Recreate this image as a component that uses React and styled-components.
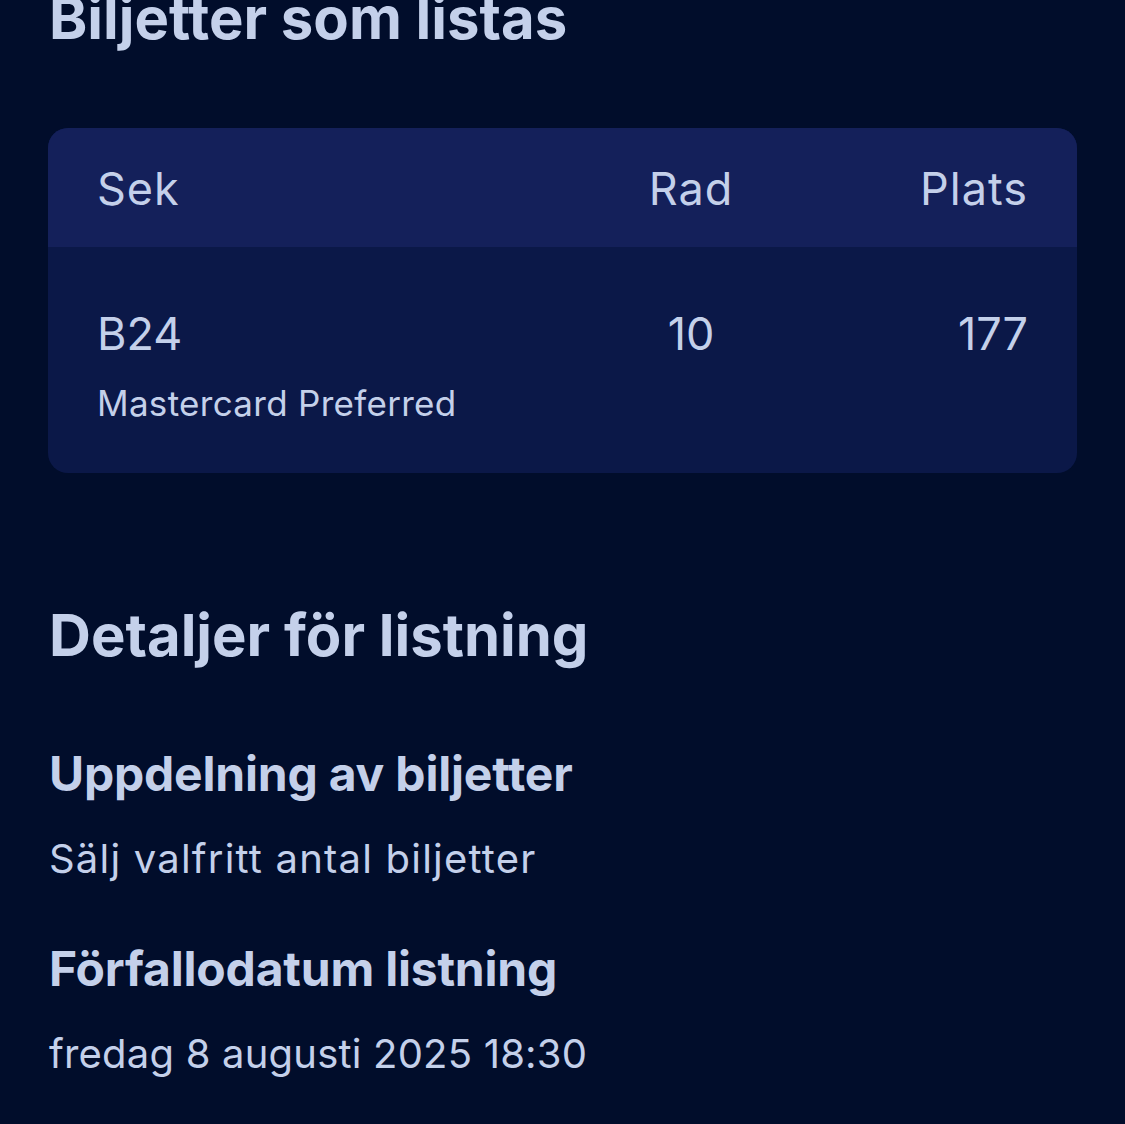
import React from 'react';
import styled, { createGlobalStyle } from 'styled-components';

const GlobalStyle = createGlobalStyle`
  html, body {
    margin: 0;
    padding: 0;
    background: #010d2b;
  }
  body {
    font-family: 'Inter', 'Noto Sans', sans-serif;
    color: #c4d0ea;
  }
`;

const Page = styled.div`
  padding: 0 48px;
  min-height: 1124px;
  box-sizing: border-box;
  overflow: hidden;
`;

const Title = styled.h1`
  margin: 0;
  font-size: 58px;
  font-weight: 700;
  line-height: 64px;
  letter-spacing: 0;
  padding-left: 1px;
  margin-top: ${p => p.offset || 0}px;
`;

const Card = styled.div`
  margin-top: 78px;
  border-radius: 20px;
  overflow: hidden;
  background: #0b1848;
`;

const Row = styled.div`
  display: grid;
  grid-template-columns: 1fr 180px 247px;
  align-items: start;
  padding: ${p => p.head ? '36px 49px 0 49px' : '62px 49px 0 49px'};
  height: ${p => p.head ? '119px' : '226px'};
  box-sizing: border-box;
  background: ${p => p.head ? '#14205a' : 'transparent'};
`;

const Cell = styled.div`
  font-size: 45px;
  line-height: 50px;
  font-weight: 400;
  text-align: ${p => p.align || 'left'};
  letter-spacing: ${p => p.head ? '1px' : '0'};
`;

const Sub = styled.div`
  margin-top: 24px;
  font-size: 35px;
  line-height: 40px;
  letter-spacing: 0.3px;
`;

const Section = styled.div`
  margin-top: ${p => p.gap}px;
`;

const Label = styled.div`
  font-size: 48px;
  font-weight: 700;
  line-height: 56px;
  letter-spacing: -0.2px;
  padding-left: 1px;
`;

const Value = styled.div`
  margin-top: 34px;
  font-size: 40px;
  line-height: 46px;
  letter-spacing: ${p => p.spacing || 0.6}px;
  padding-left: 1px;
`;

export default function App() {
  return (
    <>
      <GlobalStyle />
      <Page>
        <Title offset={-14}>Biljetter som listas</Title>
        <Card>
          <Row head>
            <Cell head>Sek</Cell>
            <Cell head align="center">Rad</Cell>
            <Cell head align="right">Plats</Cell>
          </Row>
          <Row>
            <div>
              <Cell>B24</Cell>
              <Sub>Mastercard Preferred</Sub>
            </div>
            <Cell align="center">10</Cell>
            <Cell align="right">177</Cell>
          </Row>
        </Card>
        <Section gap={130}>
          <Title>Detaljer för listning</Title>
        </Section>
        <Section gap={79}>
          <Label>Uppdelning av biljetter</Label>
          <Value spacing={1.2}>Sälj valfritt antal biljetter</Value>
        </Section>
        <Section gap={59}>
          <Label>Förfallodatum listning</Label>
          <Value spacing={0.2}>fredag 8 augusti 2025 18:30</Value>
        </Section>
      </Page>
    </>
  );
}
